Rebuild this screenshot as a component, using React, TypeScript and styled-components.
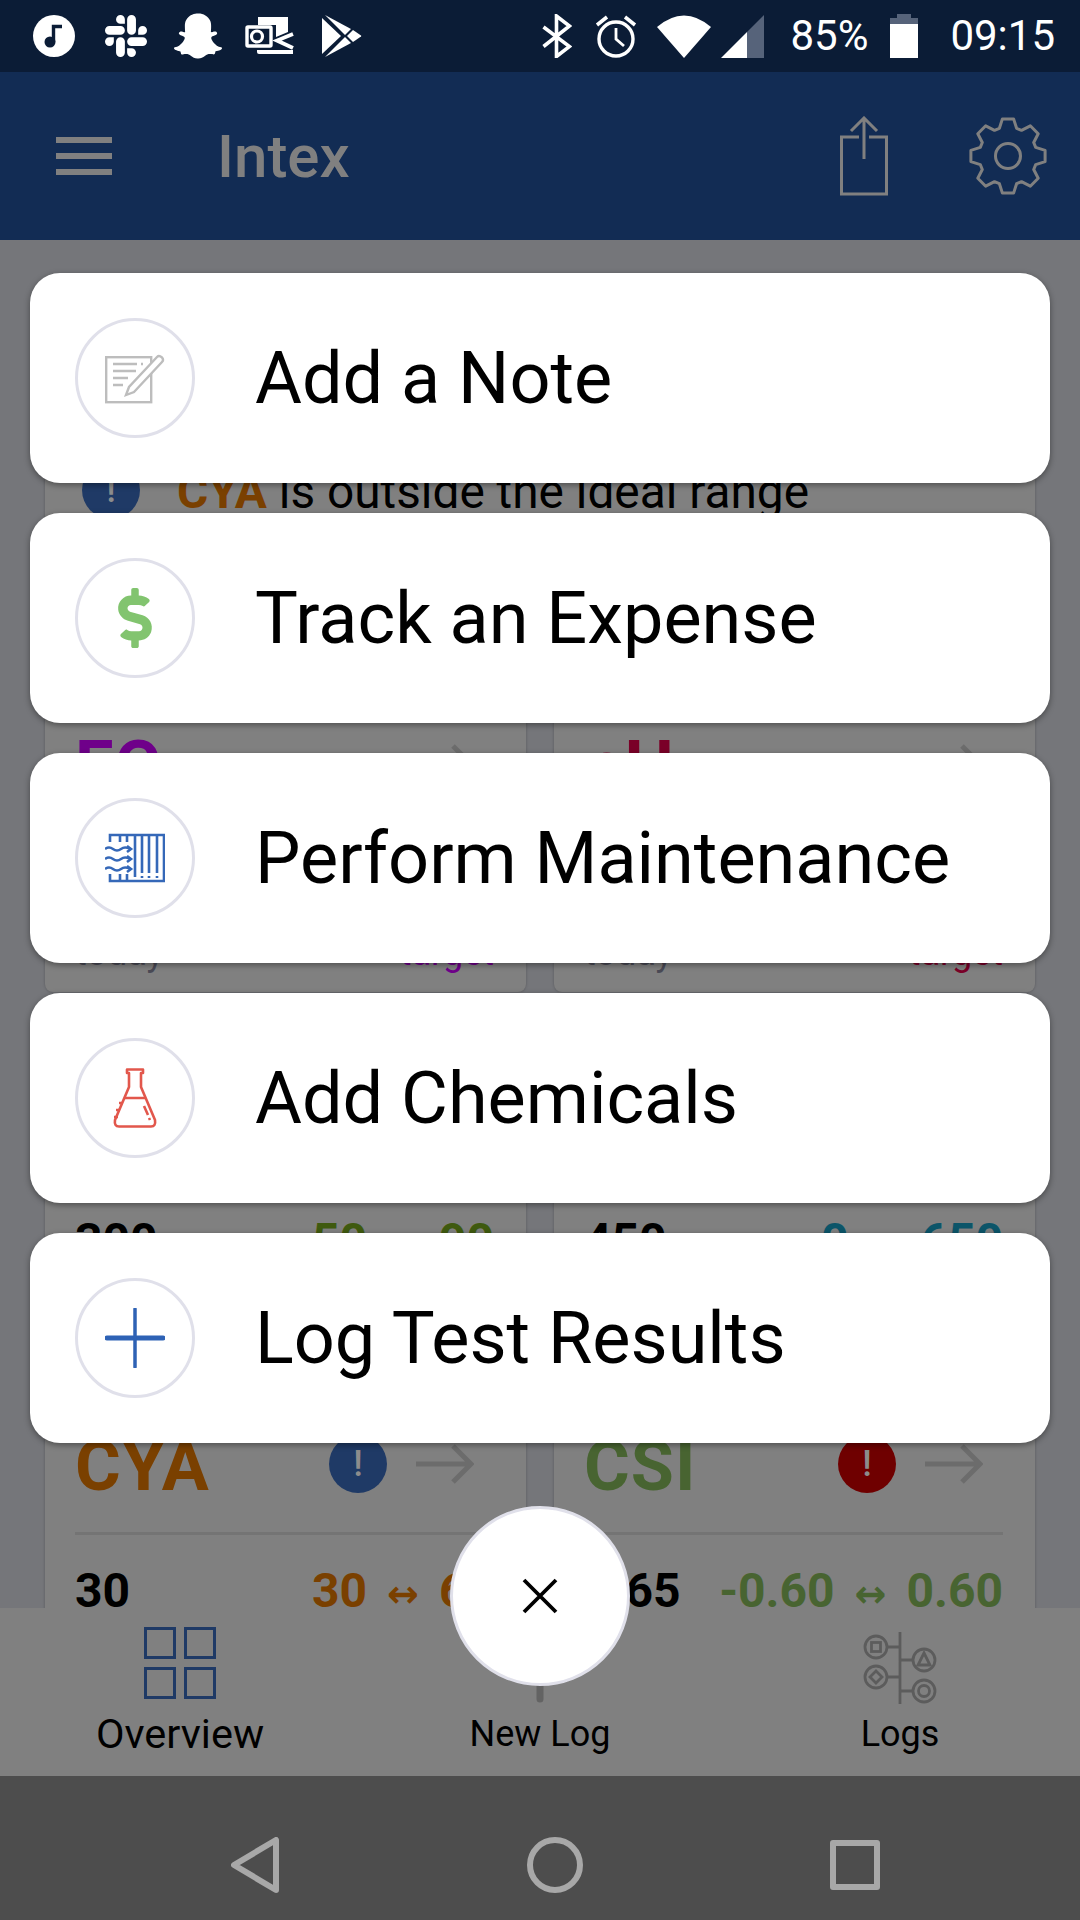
import React from "react"
import styled, { createGlobalStyle } from "styled-components"
import { FaDollarSign, FaSnapchatGhost } from "react-icons/fa"
import { SiSlack } from "react-icons/si"

const GlobalStyle = createGlobalStyle`
    html, body {
        margin: 0;
        padding: 0;
        background: #4d4d4d;
    }

    * {
        box-sizing: border-box;
    }
`

const Screen = styled.div`
    position: relative;
    display: flex;
    flex-direction: column;
    width: 1080px;
    height: 1920px;
    overflow: hidden;
    font-family: Roboto, "Liberation Sans", sans-serif;
`

const StatusBar = styled.div`
    display: flex;
    align-items: center;
    flex: 0 0 72px;
    padding-left: 18px;
    background-color: #0b1c36;
    color: white;
`

const StatusSlot = styled.div`
    display: flex;
    justify-content: center;
    align-items: center;
    width: 72px;
    height: 72px;
`

const StatusRight = styled.div`
    display: flex;
    align-items: center;
    margin-left: auto;
    padding-right: 25px;
`

const StatusText = styled.span<{ $left: number }>`
    margin-left: ${props => props.$left}px;
    font-size: 42px;
    line-height: 72px;
`

const StatusIcon = styled.svg<{ $left: number }>`
    display: block;
    margin-left: ${props => props.$left}px;
`

const Battery = styled.div`
    position: relative;
    width: 28px;
    height: 40px;
    margin: 4px 0 0 22px;
    border-top: 6px solid #56637a;
    background-color: white;

    &::before {
        content: "";
        position: absolute;
        top: -10px;
        left: 7px;
        width: 14px;
        height: 4px;
        background-color: #56637a;
    }
`

const Header = styled.div`
    display: flex;
    align-items: center;
    flex: 0 0 168px;
    padding: 0 33px 0 56px;
    background-color: #122c54;
    color: #808080;
`

const Burger = styled.div`
    display: flex;
    flex-direction: column;
    gap: 10px;
    width: 56px;
    margin-top: -1px;

    span {
        height: 6px;
        background-color: #808080;
    }
`

const Title = styled.h1`
    flex: 1;
    margin: 2px 0 0 105px;
    font-size: 60px;
    font-weight: 500;
    line-height: 68px;
`

const HeaderIcons = styled.div`
    display: flex;
    align-items: center;
    gap: 81px;
`

const Body = styled.div`
    flex: 1;
    min-height: 0;
    padding: 0 45px;
    overflow: hidden;
    background-color: #75767a;
`

const Card = styled.div`
    border-radius: 8px;
    background-color: #808080;
    box-shadow: 0 0 3px rgba(0, 0, 0, 0.25);
`

const AlertCard = styled(Card)`
    display: flex;
    align-items: flex-start;
    gap: 37px;
    height: 212px;
    margin: 190px 0 30px;
    padding: 31px 0 0 37px;
`

const AlertText = styled.p`
    margin: 2px 0 0;
    color: #000;
    font-size: 47.8px;
    line-height: 58px;

    strong {
        color: #7a4000;
    }
`

const StatusDot = styled.div<{ $color: string }>`
    display: flex;
    justify-content: center;
    align-items: center;
    flex: 0 0 58px;
    height: 58px;
    border-radius: 50%;
    background-color: ${props => props.$color};
    color: #8c8c8c;
    font-size: 36px;
    font-weight: 500;
`

const Grid = styled.div`
    display: grid;
    grid-template-columns: 481px 481px;
    grid-auto-rows: 320px;
    justify-content: space-between;
    row-gap: 30px;
`

const MetricCard = styled(Card)`
    padding: 60px 32px 0 30px;
`

const MetricHead = styled.div`
    display: flex;
    align-items: center;
    gap: 29px;
    height: 64px;
    padding-right: 20px;
`

const MetricName = styled.h2<{ $color: string }>`
    flex: 1;
    margin: 0;
    padding-top: 4px;
    color: ${props => props.$color};
    font-size: 70px;
    font-weight: 700;
    letter-spacing: 1px;
    line-height: 64px;
`

const Divider = styled.div`
    height: 3px;
    margin: 36px 0 27px;
    background-color: #747474;
`

const Values = styled.div`
    display: flex;
    justify-content: space-between;
    align-items: center;
    height: 56px;
    color: #000;
    font-size: 48px;
    font-weight: 700;
`

const Range = styled.div<{ $color: string }>`
    display: flex;
    align-items: center;
    gap: 20px;
    color: ${props => props.$color};
`

const RangeArrow = styled.span`
    font-family: "DejaVu Sans", sans-serif;
    font-size: 38px;
    line-height: 56px;
    padding-top: 8px;
`

const Captions = styled.div<{ $color: string }>`
    display: flex;
    justify-content: space-between;
    margin-top: 13px;
    color: #4a4a55;
    font-size: 36px;
    line-height: 44px;

    em {
        color: ${props => props.$color};
        font-style: normal;
    }
`

const TabBar = styled.div`
    display: grid;
    grid-template-columns: repeat(3, 1fr);
    flex: 0 0 168px;
    background-color: #808080;
`

const Tab = styled.div<{ $large?: boolean }>`
    display: flex;
    flex-direction: column;
    align-items: center;
    padding-top: 19px;
    color: #000;
    font-size: ${props => props.$large ? 41.5 : 36}px;
    line-height: 48px;
`

const TabIcon = styled.div`
    display: flex;
    align-items: flex-start;
    justify-content: center;
    height: 78px;
    margin-bottom: 5px;
`

const SystemBar = styled.div`
    display: flex;
    justify-content: center;
    align-items: center;
    flex: 0 0 144px;
    padding: 33px 0 0 30px;
    background-color: #4d4d4d;
`

const SystemSlot = styled.div`
    display: flex;
    justify-content: center;
    width: 300px;
`

const Sheet = styled.div`
    position: absolute;
    top: 273px;
    left: 30px;
    right: 30px;
    display: flex;
    flex-direction: column;
    gap: 30px;
`

const SheetRow = styled.div`
    display: flex;
    align-items: center;
    gap: 60px;
    height: 210px;
    padding-left: 45px;
    border-radius: 30px;
    background-color: white;
    box-shadow: 0 2px 6px rgba(0, 0, 0, 0.4);
`

const SheetCircle = styled.div`
    display: flex;
    justify-content: center;
    align-items: center;
    flex: 0 0 120px;
    height: 120px;
    border: 3px solid #e0e0ea;
    border-radius: 50%;
`

const SheetLabel = styled.span`
    padding-top: 2px;
    color: #000;
    font-size: 72px;
    line-height: 84px;
`

const CloseButton = styled.div`
    position: absolute;
    top: 1506px;
    left: 450px;
    display: flex;
    justify-content: center;
    align-items: center;
    width: 180px;
    height: 180px;
    border: 3px solid #e0e0ea;
    border-radius: 50%;
    background-color: white;
`

const MusicIcon = () => (
    <svg width="42" height="42" viewBox="0 0 42 42">
        <circle cx="21" cy="21" r="21" fill="white" />
        <circle cx="17" cy="27" r="5.5" fill="#0b1c36" />
        <path d="M20.5 27V11.5h8.5" fill="none" stroke="#0b1c36" strokeWidth="3.4" />
    </svg>
)

const OutlookIcon = () => (
    <svg width="50" height="40" viewBox="0 0 50 40">
        <path d="M13 1H43V16L31 21V9H13Z" fill="white" />
        <rect x="2" y="11" width="24" height="19" rx="1" fill="#0b1c36" stroke="white" strokeWidth="3.4" />
        <circle cx="12" cy="20.500" r="5.500" fill="none" stroke="white" strokeWidth="3.200" />
        <path d="M48 18 32 24.500 48 32" fill="none" stroke="white" strokeWidth="3.800" />
        <path d="M12 34H48V38H14Q12 38 12 36Z" fill="white" />
    </svg>
)

const PlayIcon = () => (
    <svg width="40" height="42" viewBox="0 0 40 42" fill="white">
        <path d="M0 3 19 21 0 39Z" />
        <path d="M3 0 29 14 23 20Z" />
        <path d="M3 42 29 28 23 22Z" />
        <path d="M31 15 39 20.5Q39.6 21 39 21.5L31 27 25 21Z" />
    </svg>
)

const BluetoothIcon = () => (
    <StatusIcon $left={3} width="30" height="44" viewBox="0 0 30 44">
        <path d="M1.5 13 27.5 32.5 14.5 42.5V2L27.5 12 1.5 32.5" fill="none" stroke="white" strokeWidth="3.6" />
    </StatusIcon>
)

const AlarmIcon = () => (
    <StatusIcon $left={22} width="44" height="44" viewBox="0 0 44 44">
        <circle cx="22" cy="25" r="17" fill="none" stroke="white" strokeWidth="3.4" />
        <path d="M22 14V25L30 32" fill="none" stroke="white" strokeWidth="2.8" />
        <path d="M3 11 13 3M41 11 31 3" fill="none" stroke="white" strokeWidth="3.6" />
    </StatusIcon>
)

const WifiIcon = () => (
    <StatusIcon $left={19} width="54" height="44" viewBox="0 0 54 44">
        <path d="M27 44 0 13Q27 -10 54 13Z" fill="white" />
    </StatusIcon>
)

const SignalIcon = () => (
    <StatusIcon $left={10} width="43" height="44" viewBox="0 0 43 44">
        <path d="M26 18 43 1V44H26Z" fill="#56637a" />
        <path d="M0 44 26 18V44Z" fill="white" />
    </StatusIcon>
)

const ShareIcon = () => (
    <svg width="48" height="80" viewBox="0 0 48 80" fill="none" stroke="#808080" strokeWidth="3">
        <path d="M19 21H1.5V78H46.5V21H29" />
        <path d="M24 43V3M11 15 24 2 37 15" />
    </svg>
)

// builds the cog outline instead of typing out every tooth by hand
const gearPath = () => {
    const teeth = 8
    const points: string[] = []
    for (let i = 0; i < teeth; i++) {
        const center = (i / teeth) * Math.PI * 2 - Math.PI / 2
        const offsets = [[-0.3, 29], [-0.15, 37.5], [0.15, 37.5], [0.3, 29]]
        offsets.forEach(([a, r]) => {
            const x = 39 + Math.cos(center + a) * r
            const y = 39 + Math.sin(center + a) * r
            points.push(`${x.toFixed(1)} ${y.toFixed(1)}`)
        })
    }
    return `M${points.join("L")}Z`
}

const GearIcon = () => (
    <svg width="78" height="78" viewBox="0 0 78 78" fill="none" stroke="#808080" strokeWidth="3" strokeLinejoin="round">
        <path d={gearPath()} />
        <circle cx="39" cy="39" r="12.5" />
    </svg>
)

const ArrowIcon = () => (
    <svg width="58" height="40" viewBox="0 0 58 40" fill="none" stroke="#6c6c6c" strokeWidth="5">
        <path d="M0 20H55M37 2 55 20 37 38" />
    </svg>
)

const NoteIcon = () => (
    <svg width="60" height="60" viewBox="0 0 60 60" fill="none" stroke="#bdbdbd">
        <rect x="1.200" y="9.200" width="45" height="45" strokeWidth="2.400" />
        <path d="M8 16H32M8 23H31M8 30H23M8 37H18" strokeWidth="2.400" />
        <path d="M36 16H38" strokeWidth="2.400" />
        <path d="M21 47 24 39 52 9Q54 7 57 9.500 59 12 57 14L29 44Z" fill="white" strokeWidth="2.400" />
    </svg>
)

const FilterIcon = () => (
    <svg width="60" height="60" viewBox="0 0 60 60" fill="none" stroke="#3568b8" strokeWidth="2.600">
        <path d="M5 14V7H59V53H5V46" />
        <path d="M15 7V14M22 7V14M15 46V53M22 46V53M30 7V49" />
        <path d="M37 7V45M44 7V45M52 7V45M37 48V50M44 48V50M52 48V50" />
        <path d="M0 21Q4 18 8 21T16 21 25 21M0 31Q4 28 8 31T16 31 25 31M0 41Q4 38 8 41T16 41 25 41" />
        <path d="M22 18 26 21 22 24M22 28 26 31 22 34M22 38 26 41 22 44" />
    </svg>
)

const FlaskIcon = () => (
    <svg width="60" height="60" viewBox="0 0 60 60" fill="none" stroke="#e2574c" strokeWidth="2.600" strokeLinejoin="round">
        <path d="M22 1.500H38V5H36V19L50 52Q51 58.500 46 58.500H14Q9 58.500 10 52L24 19V5H22Z" />
        <path d="M19 30H41M18 35H14M15 42H11M13 49H9M39 38 43 47M44 50 45 52" />
    </svg>
)

const PlusIcon = () => (
    <svg width="60" height="60" viewBox="0 0 60 60" fill="none" stroke="#2e62b5" strokeLinecap="round">
        <path d="M2 30H58" strokeWidth="5" />
        <path d="M30 1V59" strokeWidth="3.500" />
    </svg>
)

const CloseIcon = () => (
    <svg width="36" height="36" viewBox="0 0 36 36" fill="none" stroke="#000" strokeWidth="3.800">
        <path d="M2 2 34 34M34 2 2 34" />
    </svg>
)

const GridIcon = () => (
    <svg width="72" height="72" viewBox="0 0 72 72" fill="none" stroke="#1f3a66" strokeWidth="3">
        <rect x="1.500" y="1.500" width="29" height="29" />
        <rect x="41.500" y="1.500" width="29" height="29" />
        <rect x="1.500" y="41.500" width="29" height="29" />
        <rect x="41.500" y="41.500" width="29" height="29" />
    </svg>
)

const NewLogIcon = () => (
    <svg width="72" height="78" viewBox="0 0 72 78" fill="none" stroke="#636363" strokeWidth="7" strokeLinecap="round">
        <path d="M36 6V72M3 39H69" />
    </svg>
)

const LogsIcon = () => (
    <svg width="74" height="74" viewBox="0 0 74 74" fill="none" stroke="#5c5c5c" strokeWidth="2.800" style={{ marginTop: 5 }}>
        <path d="M37 0V72M24 15H37M37 28H49M24 45H37M37 59H49" />
        <circle cx="13" cy="15" r="11" />
        <circle cx="61" cy="28" r="11" />
        <circle cx="13" cy="45" r="11" />
        <circle cx="61" cy="59" r="11" />
        <rect x="8.500" y="10.500" width="9" height="9" />
        <path d="M61 21 67 33H55Z" />
        <path d="M13 39 19 45 13 51 7 45Z" />
        <circle cx="61" cy="59" r="5.500" />
    </svg>
)

const metrics = [
    { name: "FC", color: "#6f008a", value: "3.0", min: "1", max: "4" },
    { name: "pH", color: "#7a0028", value: "7.5", min: "7.2", max: "7.8" },
    { name: "TA", color: "#3f5a0f", value: "300", min: "50", max: "90" },
    { name: "TDS", color: "#0c5569", value: "450", min: "0", max: "650" },
    { name: "CYA", color: "#7a4000", value: "30", min: "30", max: "60", status: "#1f3a66" },
    { name: "CSI", color: "#486431", value: "7.65", min: "-0.60", max: "0.60", status: "#6f0000" },
]

const actions = [
    { label: "Add a Note", icon: <NoteIcon /> },
    { label: "Track an Expense", icon: <FaDollarSign size={60} color="#82c46f" /> },
    { label: "Perform Maintenance", icon: <FilterIcon /> },
    { label: "Add Chemicals", icon: <FlaskIcon /> },
    { label: "Log Test Results", icon: <PlusIcon /> },
]

export default function App() {
    return (
        <Screen>
            <GlobalStyle />

            <StatusBar>
                <StatusSlot><MusicIcon /></StatusSlot>
                <StatusSlot><SiSlack size={42} /></StatusSlot>
                <StatusSlot><FaSnapchatGhost size={48} /></StatusSlot>
                <StatusSlot><OutlookIcon /></StatusSlot>
                <StatusSlot><PlayIcon /></StatusSlot>
                <StatusRight>
                    <BluetoothIcon />
                    <AlarmIcon />
                    <WifiIcon />
                    <SignalIcon />
                    <StatusText $left={26}>85%</StatusText>
                    <Battery />
                    <StatusText $left={32}>09:15</StatusText>
                </StatusRight>
            </StatusBar>

            <Header>
                <Burger><span /><span /><span /></Burger>
                <Title>Intex</Title>
                <HeaderIcons>
                    <ShareIcon />
                    <GearIcon />
                </HeaderIcons>
            </Header>

            <Body>
                <AlertCard>
                    <StatusDot $color="#1f3a66">!</StatusDot>
                    <AlertText><strong>CYA</strong> is outside the ideal range</AlertText>
                </AlertCard>

                <Grid>
                    {metrics.map(metric => (
                        <MetricCard key={metric.name}>
                            <MetricHead>
                                <MetricName $color={metric.color}>{metric.name}</MetricName>
                                {metric.status && <StatusDot $color={metric.status}>!</StatusDot>}
                                <ArrowIcon />
                            </MetricHead>
                            <Divider />
                            <Values>
                                <span>{metric.value}</span>
                                <Range $color={metric.color}>
                                    <span>{metric.min}</span>
                                    <RangeArrow>↔</RangeArrow>
                                    <span>{metric.max}</span>
                                </Range>
                            </Values>
                            <Captions $color={metric.color}>
                                <span>today</span>
                                <em>target</em>
                            </Captions>
                        </MetricCard>
                    ))}
                </Grid>
            </Body>

            <TabBar>
                <Tab $large>
                    <TabIcon><GridIcon /></TabIcon>
                    Overview
                </Tab>
                <Tab>
                    <TabIcon><NewLogIcon /></TabIcon>
                    New Log
                </Tab>
                <Tab>
                    <TabIcon><LogsIcon /></TabIcon>
                    Logs
                </Tab>
            </TabBar>

            <SystemBar>
                <SystemSlot>
                    <svg width="48" height="56" viewBox="0 0 48 56" fill="none" stroke="#a8a8a8" strokeWidth="6" strokeLinejoin="round">
                        <path d="M45 3V53L3 28Z" />
                    </svg>
                </SystemSlot>
                <SystemSlot>
                    <svg width="56" height="56" viewBox="0 0 56 56" fill="none" stroke="#a8a8a8" strokeWidth="6">
                        <circle cx="28" cy="28" r="25" />
                    </svg>
                </SystemSlot>
                <SystemSlot>
                    <svg width="50" height="50" viewBox="0 0 50 50" fill="none" stroke="#a8a8a8" strokeWidth="6" strokeLinejoin="round">
                        <rect x="3" y="3" width="44" height="44" />
                    </svg>
                </SystemSlot>
            </SystemBar>

            <Sheet>
                {actions.map(action => (
                    <SheetRow key={action.label}>
                        <SheetCircle>{action.icon}</SheetCircle>
                        <SheetLabel>{action.label}</SheetLabel>
                    </SheetRow>
                ))}
            </Sheet>

            <CloseButton><CloseIcon /></CloseButton>
        </Screen>
    )
}
